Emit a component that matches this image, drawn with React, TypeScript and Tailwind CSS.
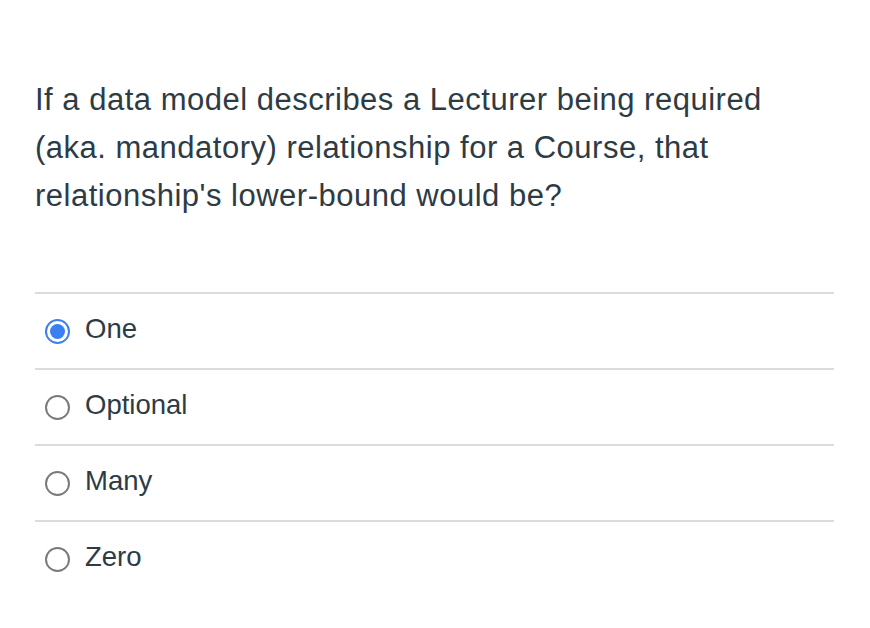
const options = ["One", "Optional", "Many", "Zero"];

export default function App() {
  const selected = "One";
  return (
    <div
      className="min-h-screen bg-white pt-[76px] pl-[35px] pr-[36px] text-[#2d3b45]"
      style={{ fontFamily: '"Liberation Sans", Arial, sans-serif' }}
    >
      <p className="text-[31px] leading-[48px] tracking-[0.5px]">
        If a data model describes a Lecturer being required
        <br />
        (aka. mandatory) relationship for a Course, that
        <br />
        relationship's lower-bound would be?
      </p>

      <div className="mt-[72px]">
        {options.map((opt) => {
          const checked = opt === selected;
          return (
            <label
              key={opt}
              className="flex h-[76px] items-center border-t-2 border-[#dcdcdc]"
            >
              {checked ? (
                <span className="ml-[10px] flex h-[25px] w-[25px] items-center justify-center rounded-full border-2 border-[#3b7ff2]">
                  <span className="h-[15px] w-[15px] rounded-full bg-[#3b7ff2]" />
                </span>
              ) : (
                <span className="ml-[10px] h-[25px] w-[25px] rounded-full border-2 border-[#7a7a7a]" />
              )}
              <span className="ml-[15px] pb-[5px] text-[27.5px] leading-none">{opt}</span>
            </label>
          );
        })}
      </div>
    </div>
  );
}
